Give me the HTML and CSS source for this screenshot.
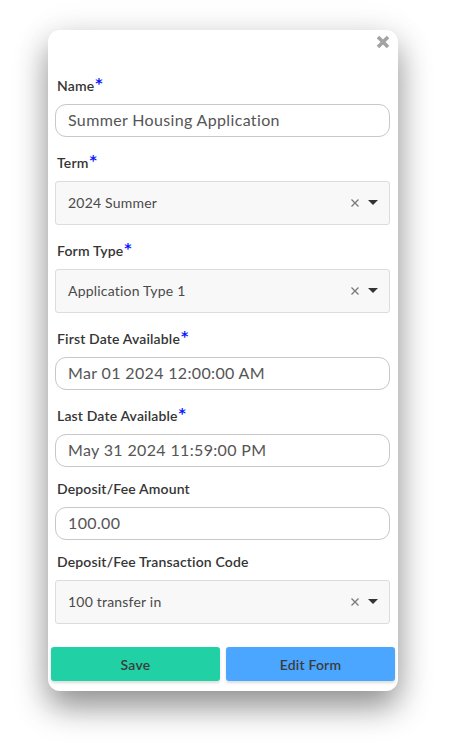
FILE: index.html
```html
<!DOCTYPE html>
<html lang="en">
<head>
<meta charset="utf-8">
<title>Form Settings</title>
<link rel="stylesheet" href="styles.css">
</head>
<body>
<div class="card">
  <div class="card-header">
    <button class="close" aria-label="Close">
      <svg width="14" height="14" viewBox="0 0 14 14"><path d="M2 2 L12 12 M12 2 L2 12" stroke="#a3a3a3" stroke-width="3.6" stroke-linecap="butt"/></svg>
    </button>
  </div>
  <div class="form">
    <div class="group">
      <label class="label req">Name<span class="ast">*</span></label>
      <div class="input">Summer Housing Application</div>
    </div>
    <div class="group">
      <label class="label req">Term<span class="ast">*</span></label>
      <div class="select"><span class="val">2024 Summer</span><span class="ctrl"><svg class="clr" width="8" height="8" viewBox="0 0 8 8"><path d="M0.5 0.5 L7.5 7.5 M7.5 0.5 L0.5 7.5" stroke="#7a7a7a" stroke-width="1.3"/></svg><svg class="arr" width="10" height="5" viewBox="0 0 10 5"><path d="M0 0 H10 L5 5 Z" fill="#333"/></svg></span></div>
    </div>
    <div class="group">
      <label class="label req">Form Type<span class="ast">*</span></label>
      <div class="select"><span class="val">Application Type 1</span><span class="ctrl"><svg class="clr" width="8" height="8" viewBox="0 0 8 8"><path d="M0.5 0.5 L7.5 7.5 M7.5 0.5 L0.5 7.5" stroke="#7a7a7a" stroke-width="1.3"/></svg><svg class="arr" width="10" height="5" viewBox="0 0 10 5"><path d="M0 0 H10 L5 5 Z" fill="#333"/></svg></span></div>
    </div>
    <div class="group">
      <label class="label req">First Date Available<span class="ast">*</span></label>
      <div class="input">Mar 01 2024 12:00:00 AM</div>
    </div>
    <div class="group">
      <label class="label req">Last Date Available<span class="ast">*</span></label>
      <div class="input">May 31 2024 11:59:00 PM</div>
    </div>
    <div class="group">
      <label class="label">Deposit/Fee Amount</label>
      <div class="input">100.00</div>
    </div>
    <div class="group">
      <label class="label">Deposit/Fee Transaction Code</label>
      <div class="select"><span class="val">100 transfer in</span><span class="ctrl"><svg class="clr" width="8" height="8" viewBox="0 0 8 8"><path d="M0.5 0.5 L7.5 7.5 M7.5 0.5 L0.5 7.5" stroke="#7a7a7a" stroke-width="1.3"/></svg><svg class="arr" width="10" height="5" viewBox="0 0 10 5"><path d="M0 0 H10 L5 5 Z" fill="#333"/></svg></span></div>
    </div>
  </div>
  <div class="actions">
    <button class="btn save">Save</button>
    <button class="btn edit">Edit Form</button>
  </div>
</div>
</body>
</html>
```
FILE: styles.css
```css
html, body {
  margin: 0;
  padding: 0;
  background: #ffffff;
}
html { min-height: 100%; }
body {
  min-height: 743px;
  box-sizing: border-box;
  padding: 30px 0 52px 48px;
  font-family: "Lato", "Noto Sans", "DejaVu Sans", sans-serif;
  color: #333;
}
.card {
  width: 350px;
  box-sizing: border-box;
  background: #fff;
  border-radius: 12px;
  box-shadow: 0 16px 32px rgba(0, 0, 0, 0.42), 0 0 40px rgba(0, 0, 0, 0.06);
  padding: 5px 0 10px 0;
}
.card-header {
  height: 38px;
  display: flex;
  justify-content: flex-end;
  align-items: flex-start;
  padding-right: 8px;
}
.close {
  border: 0;
  background: none;
  padding: 0;
  width: 14px;
  height: 14px;
  display: block;
}
.close svg { display: block; }
.form {
  padding: 0 8px 0 7px;
}
.group {
  margin-bottom: 13px;
}
.group:last-child {
  margin-bottom: 0;
}
.label {
  display: block;
  font-size: 14px;
  line-height: 18px;
  font-weight: 600;
  letter-spacing: 0.15px;
  color: #353535;
  padding-left: 2px;
  margin-bottom: 9px;
}
.label.req {
  padding-top: 4px;
}
.ast {
  color: #0a14ff;
  font-family: "DejaVu Sans", sans-serif;
  font-size: 14px;
  line-height: 0;
  vertical-align: 3px;
  font-weight: 700;
  margin-left: 1px;
}
.input {
  box-sizing: border-box;
  height: 33px;
  border: 1px solid #c8c8c8;
  border-radius: 11px;
  padding: 0 12px;
  font-size: 16px;
  line-height: 30px;
  letter-spacing: 0.35px;
  color: #555;
  background: #fff;
}
.select {
  box-sizing: border-box;
  height: 44px;
  border: 1px solid #dcdcdc;
  border-radius: 3px;
  background: #f8f8f8;
  display: flex;
  align-items: center;
  justify-content: space-between;
  padding: 0 11px 1px 12px;
  font-size: 14px;
  letter-spacing: 0.2px;
  color: #4a4a4a;
}
.ctrl {
  display: flex;
  align-items: center;
  gap: 9px;
}
.ctrl svg { display: block; }
.actions {
  display: flex;
  gap: 6px;
  padding: 0 3px;
  margin-top: 23px;
}
.btn {
  flex: 1;
  height: 34px;
  border: 0;
  border-radius: 3px;
  font-family: inherit;
  font-size: 14px;
  font-weight: 600;
  letter-spacing: 0.2px;
  color: #3c3c3c;
  box-shadow: 0 2px 3px rgba(0, 0, 0, 0.14);
}
.save { background: #21d1a5; }
.edit { background: #4ba6ff; }
```
